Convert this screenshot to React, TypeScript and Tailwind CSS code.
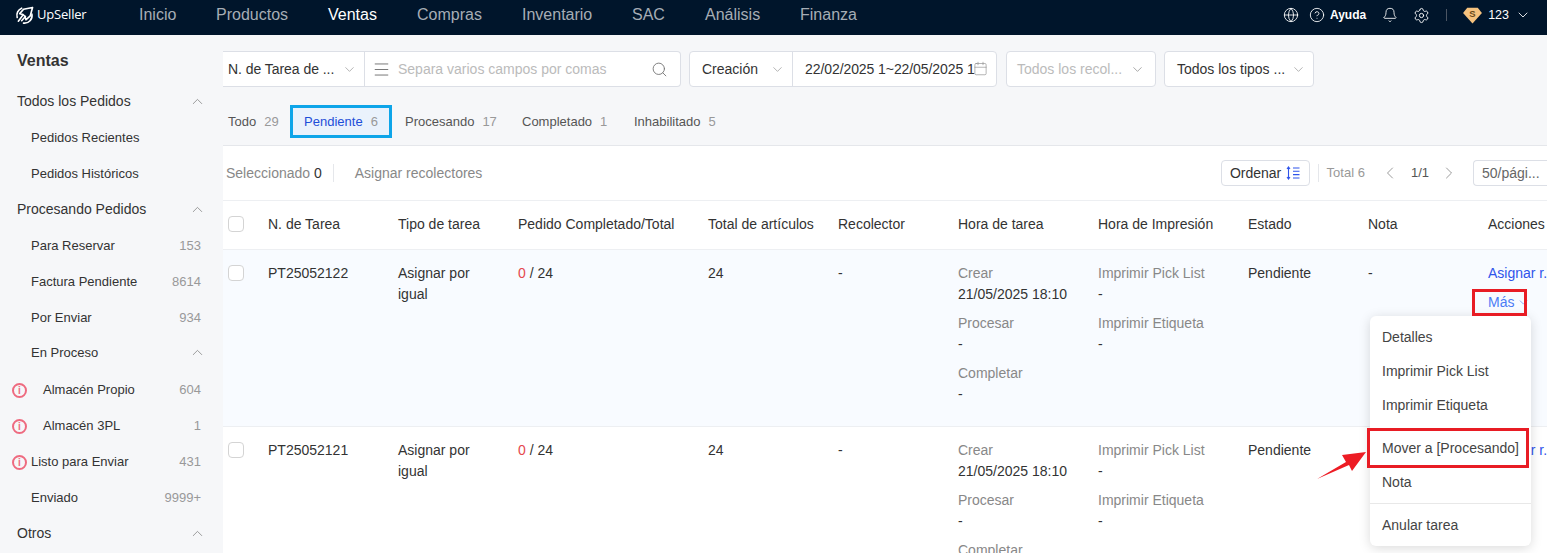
import React from "react";
import { ChevronDown, ChevronUp, ChevronLeft, ChevronRight, Search, Menu, Calendar, Globe, CircleHelp, Bell, Settings } from "lucide-react";

const navItems = ["Inicio", "Productos", "Ventas", "Compras", "Inventario", "SAC", "Análisis", "Finanza"];
const navWidths = ["w-[77px]", "w-[112px]", "w-[89px]", "w-[105px]", "w-[110px]", "w-[73px]", "w-[95px]", "w-[80px]"];

function Logo() {
  return (
    <svg width="19" height="19" viewBox="0 0 20 20" fill="none" stroke="white" strokeWidth="1.700" strokeLinecap="round" strokeLinejoin="round">
      <path d="M7 2.300A8 8 0 0 0 2.300 12" />
      <path d="M18.500 1.500 9 3.500 5 8l3.500 1 2 2 1 3.500 4.500-4z" />
      <path d="M8 10 3.500 16" />
      <path d="M17.800 8.500A8 8 0 0 1 9 18" />
      <path d="M11 11 7 15.500" />
    </svg>
  );
}

function Alert() {
  return (
    <span className="flex h-[15px] w-[15px] items-center justify-center rounded-full border-2 border-[#ee6b80] text-[10px] font-bold leading-none text-[#ee6b80]">i</span>
  );
}

function SideGroup({ label }: { label: string }) {
  return (
    <div className="flex h-9 items-center justify-between pl-[17px] pr-[17px] text-[14px] text-[#333]">
      <span>{label}</span>
      <ChevronUp size={17} strokeWidth={1} className="text-[#777]" />
    </div>
  );
}

function SideItem({ label, count, alert, indent }: { label: string; count?: string; alert?: boolean; indent?: boolean }) {
  return (
    <div className="relative flex h-9 items-center justify-between pr-[22px] pt-[2px] text-[13px] text-[#333]">
      {alert && <span className="absolute left-[12px] top-[12px]"><Alert /></span>}
      <span className={indent ? "pl-[43px]" : "pl-[31px]"}>{label}</span>
      {count && <span className="text-[#999]">{count}</span>}
    </div>
  );
}

function Sidebar() {
  return (
    <aside className="w-[223px] shrink-0 bg-[#f6f7f9]">
      <div className="flex h-[48px] items-center pl-[17px] pt-[4px] text-[16px] font-bold text-[#333]">Ventas</div>
      <SideGroup label="Todos los Pedidos" />
      <SideItem label="Pedidos Recientes" />
      <SideItem label="Pedidos Históricos" />
      <SideGroup label="Procesando Pedidos" />
      <SideItem label="Para Reservar" count="153" />
      <SideItem label="Factura Pendiente" count="8614" />
      <SideItem label="Por Enviar" count="934" />
      <div className="flex h-[36px] items-center justify-between pb-[1px] pl-[31px] pr-[17px] text-[13px] text-[#333]">
        <span>En Proceso</span>
        <ChevronUp size={17} strokeWidth={1} className="text-[#777]" />
      </div>
      <SideItem label="Almacén Propio" count="604" alert indent />
      <SideItem label="Almacén 3PL" count="1" alert indent />
      <SideItem label="Listo para Enviar" count="431" alert />
      <SideItem label="Enviado" count="9999+" />
      <SideGroup label="Otros" />
    </aside>
  );
}

function Filters() {
  const box = "flex h-9 items-center rounded border border-[#dcdfe6] bg-white text-[14px]";
  return (
    <div className="flex h-[36px] shrink-0 items-center gap-2">
      <div className="flex h-9 w-[458px] items-center rounded-r border border-l-0 border-[#dcdfe6] bg-white text-[14px]">
        <div className="flex h-full w-[142px] items-center justify-between border-r border-[#dcdfe6] pl-[5px] pr-[7px] text-[#333]">
          <span className="tracking-[-0.05px]">N. de Tarea de ...</span>
          <ChevronDown size={15} strokeWidth={1} className="text-[#888]" />
        </div>
        <div className="flex flex-1 items-center justify-between pl-[7px] pr-[12px]">
          <div className="flex items-center gap-[7px]">
            <Menu size={19} strokeWidth={1} className="text-[#555]" />
            <span className="text-[#bbb]">Separa varios campos por comas</span>
          </div>
          <Search size={17} strokeWidth={1.300} className="text-[#777]" />
        </div>
      </div>
      <div className={`${box} mr-[1px] w-[308px]`}>
        <div className="flex h-full w-[103px] items-center justify-between border-r border-[#dcdfe6] pl-3 pr-[7px] text-[#333]">
          <span>Creación</span>
          <ChevronDown size={15} strokeWidth={1} className="text-[#888]" />
        </div>
        <div className="relative flex-1 overflow-hidden pl-3 text-[#333]">
          <span className="whitespace-nowrap tracking-[-0.08px]">22/02/2025 1~22/05/2025 1</span>
          <span className="absolute right-[8px] top-[2px]"><Calendar size={15} strokeWidth={1} className="text-[#888]" /></span>
        </div>
      </div>
      <div className={`${box} w-[150px] justify-between pl-[10px] pr-[10px] text-[#bbb]`}>
        <span>Todos los recol...</span>
        <ChevronDown size={15} strokeWidth={1} className="text-[#777]" />
      </div>
      <div className={`${box} w-[150px] justify-between pl-3 pr-[7px] text-[#333]`}>
        <span>Todos los tipos ...</span>
        <ChevronDown size={15} strokeWidth={1} className="text-[#888]" />
      </div>
    </div>
  );
}

function Tabs() {
  const tab = "flex items-center gap-[8px] text-[13px]";
  return (
    <div className="flex h-[59px] shrink-0 items-start border-b border-[#e5e7eb] pl-[5px] pt-[18px]">
      <div className={`${tab} h-[33px] w-[62px] text-[#555]`}><span>Todo</span><span className="text-[#999]">29</span></div>
      <div className={`${tab} h-[33px] w-[102px] justify-center border-[3px] border-[#0ea5e9] bg-[#eaf2fc] text-[#1d4ed8]`}><span>Pendiente</span><span className="text-[#999]">6</span></div>
      <div className={`${tab} ml-[13px] h-[33px] w-[117px] text-[#555]`}><span>Procesando</span><span className="text-[#999]">17</span></div>
      <div className={`${tab} h-[33px] w-[112px] text-[#555]`}><span>Completado</span><span className="text-[#999]">1</span></div>
      <div className={`${tab} h-[33px] text-[#555]`}><span>Inhabilitado</span><span className="text-[#999]">5</span></div>
    </div>
  );
}

function Toolbar() {
  return (
    <div className="flex h-[54px] items-center justify-between pl-[3px] text-[13px]">
      <div className="flex items-center">
        <span className="text-[#888] text-[14px]">Seleccionado <span className="text-[#333]">0</span></span>
        <span className="mx-[11px] h-[18px] w-px bg-[#e5e7eb]" />
        <span className="ml-[10px] text-[14px] text-[#888]">Asignar recolectores</span>
      </div>
      <div className="flex items-center">
        <div className="flex h-[26px] w-[89px] items-center justify-center gap-[5px] rounded border border-[#dcdfe6] text-[14px] text-[#333]">
          <span>Ordenar</span>
          <svg width="14" height="14" viewBox="0 0 14 14" fill="none" stroke="#2f54eb" strokeWidth="1.100">
            <path d="M2.500 1v12M1 3l1.500-2L4 3M1 11l1.500 2L4 11M7 2h6.500M7 5.300h6.500M7 8.600h6.500M7 12h6.500" />
          </svg>
        </div>
        <span className="mx-2 h-[18px] w-px bg-[#e5e7eb]" />
        <span className="text-[13px] text-[#999]">Total 6</span>
        <ChevronLeft size={20} strokeWidth={1} className="ml-[15px] text-[#888]" />
        <span className="ml-[11px] text-[13px] text-[#555]">1/1</span>
        <ChevronRight size={20} strokeWidth={1} className="ml-[10px] text-[#888]" />
        <div className="ml-[14px] flex h-[26px] w-[74px] items-center overflow-hidden whitespace-nowrap rounded-l border border-r-0 border-[#dcdfe6] pl-2 text-[14px] text-[#666]">50/pági...</div>
      </div>
    </div>
  );
}

const cols = "grid grid-cols-[45px_130px_120px_190px_130px_120px_140px_150px_120px_120px_120px]";

function Header() {
  const titles = ["N. de Tarea", "Tipo de tarea", "Pedido Completado/Total", "Total de artículos", "Recolector", "Hora de tarea", "Hora de Impresión", "Estado", "Nota", "Acciones"];
  return (
    <div className={`${cols} h-[50px] items-center border-y border-[#edeff2] pb-[2px] text-[14px] text-[#333]`}>
      <span className="ml-[5px] h-4 w-4 rounded-sm border border-[#d4d4d4] bg-white" />
      {titles.map((t) => <span key={t} className="whitespace-nowrap">{t}</span>)}
    </div>
  );
}

function TimeBlock({ label, value }: { label: string; value: string }) {
  return (
    <div className="mb-2">
      <div className="text-[#888]">{label}</div>
      <div className="text-[#333]">{value}</div>
    </div>
  );
}

function Row({ id, bg }: { id: string; bg: string }) {
  return (
    <div className={`${cols} h-[177px] border-b border-[#edeff2] pt-[13px] text-[14px] leading-[21px] text-[#333] ${bg}`}>
      <span className="ml-[5px] mt-[2px] h-4 w-4 rounded-sm border border-[#d4d4d4] bg-white" />
      <span>{id}</span>
      <span className="pr-8">Asignar por igual</span>
      <span><span className="text-[#e5484d]">0</span> / 24</span>
      <span>24</span>
      <span>-</span>
      <div>
        <TimeBlock label="Crear" value="21/05/2025 18:10" />
        <TimeBlock label="Procesar" value="-" />
        <TimeBlock label="Completar" value="-" />
      </div>
      <div>
        <TimeBlock label="Imprimir Pick List" value="-" />
        <TimeBlock label="Imprimir Etiqueta" value="-" />
      </div>
      <span>Pendiente</span>
      <span>-</span>
      <div className="overflow-hidden whitespace-nowrap text-[#2f54eb]">
        <div>Asignar r...</div>
        <div className="mt-[8px] flex items-center gap-[3px] text-[#4b7bf5]">Más <ChevronDown size={13} strokeWidth={1.200} /></div>
      </div>
    </div>
  );
}

function DropdownMenu() {
  const item = "flex h-[34px] items-center pl-3 text-[14px] text-[#444]";
  return (
    <div className="absolute left-[1370px] top-[316px] w-[161px] rounded-md bg-white pt-[4px] shadow-[0_2px_12px_rgba(0,0,0,0.15)]">
      <div className={item}>Detalles</div>
      <div className={item}>Imprimir Pick List</div>
      <div className={item}>Imprimir Etiqueta</div>
      <div className={`${item} mt-[9px]`}>Mover a [Procesando]</div>
      <div className={item}>Nota</div>
      <div className="my-[4px] h-px bg-[#e8e8e8]" />
      <div className={`${item} mb-[4px]`}>Anular tarea</div>
    </div>
  );
}

export default function App() {
  return (
    <div className="relative h-[553px] w-[1547px] overflow-hidden bg-white font-['Liberation_Sans',Arial,sans-serif]">
      <header className="flex h-[35px] items-center bg-[#00152b] pb-[5px] text-white">
        <div className="flex w-[119px] items-center gap-[3px] pl-[15px]">
          <Logo />
          <span className="font-['Open_Sans',sans-serif] text-[13px] font-medium tracking-[-0.2px]">UpSeller</span>
        </div>
        <nav className="ml-[20px] flex flex-1 text-[16px]">
          {navItems.map((n, i) => (
            <span key={n} className={`${navWidths[i]} ${n === "Ventas" ? "font-medium text-white" : "text-[#a6adb5]"}`}>{n}</span>
          ))}
        </nav>
        <div className="flex items-center pr-[16px] text-[12px]">
          <Globe size={16} strokeWidth={1.300} />
          <CircleHelp size={16} strokeWidth={1.300} className="ml-[10px]" />
          <span className="ml-[5px] font-bold">Ayuda</span>
          <Bell size={16} strokeWidth={1.300} className="ml-[16px]" />
          <Settings size={17} strokeWidth={1.300} className="ml-[15px]" />
          <span className="ml-[16px] h-[12px] w-px bg-[#4b5563]" />
          <svg width="21" height="20" viewBox="0 0 20 18" className="ml-[15px]">
            <path d="M5 2h10l4 5-9 10L1 7z" fill="#f5c27e" />
            <text x="10" y="11" fontSize="9" fontWeight="bold" textAnchor="middle" fill="#6b4a1a">S</text>
          </svg>
          <span className="ml-[5px] text-[12.5px]">123</span>
          <ChevronDown size={16} strokeWidth={1.300} className="ml-[6px]" />
        </div>
      </header>
      <div className="flex h-[518px]">
        <Sidebar />
        <main className="flex min-w-0 flex-1 flex-col overflow-hidden bg-[#f6f7f9]">
          <div className="shrink-0 pt-4"><Filters /></div>
          <Tabs />
          <div className="min-h-0 flex-1 overflow-hidden bg-white">
            <Toolbar />
            <Header />
            <Row id="PT25052122" bg="bg-[#f8fbff]" />
            <Row id="PT25052121" bg="bg-white" />
          </div>
        </main>
      </div>
      <DropdownMenu />
      <div className="absolute left-[1472px] top-[289px] h-[27px] w-[55px] border-[3px] border-[#e81c24]" />
      <div className="absolute left-[1367px] top-[428px] h-[40px] w-[162px] border-[3px] border-[#e81c24]" />
      <svg className="absolute left-[1315px] top-[449px]" width="54" height="33" viewBox="0 0 54 33">
        <path d="M2 30 31 13 27 6 51 3 37 22 34 16z" fill="#ed1c24" />
      </svg>
    </div>
  );
}
